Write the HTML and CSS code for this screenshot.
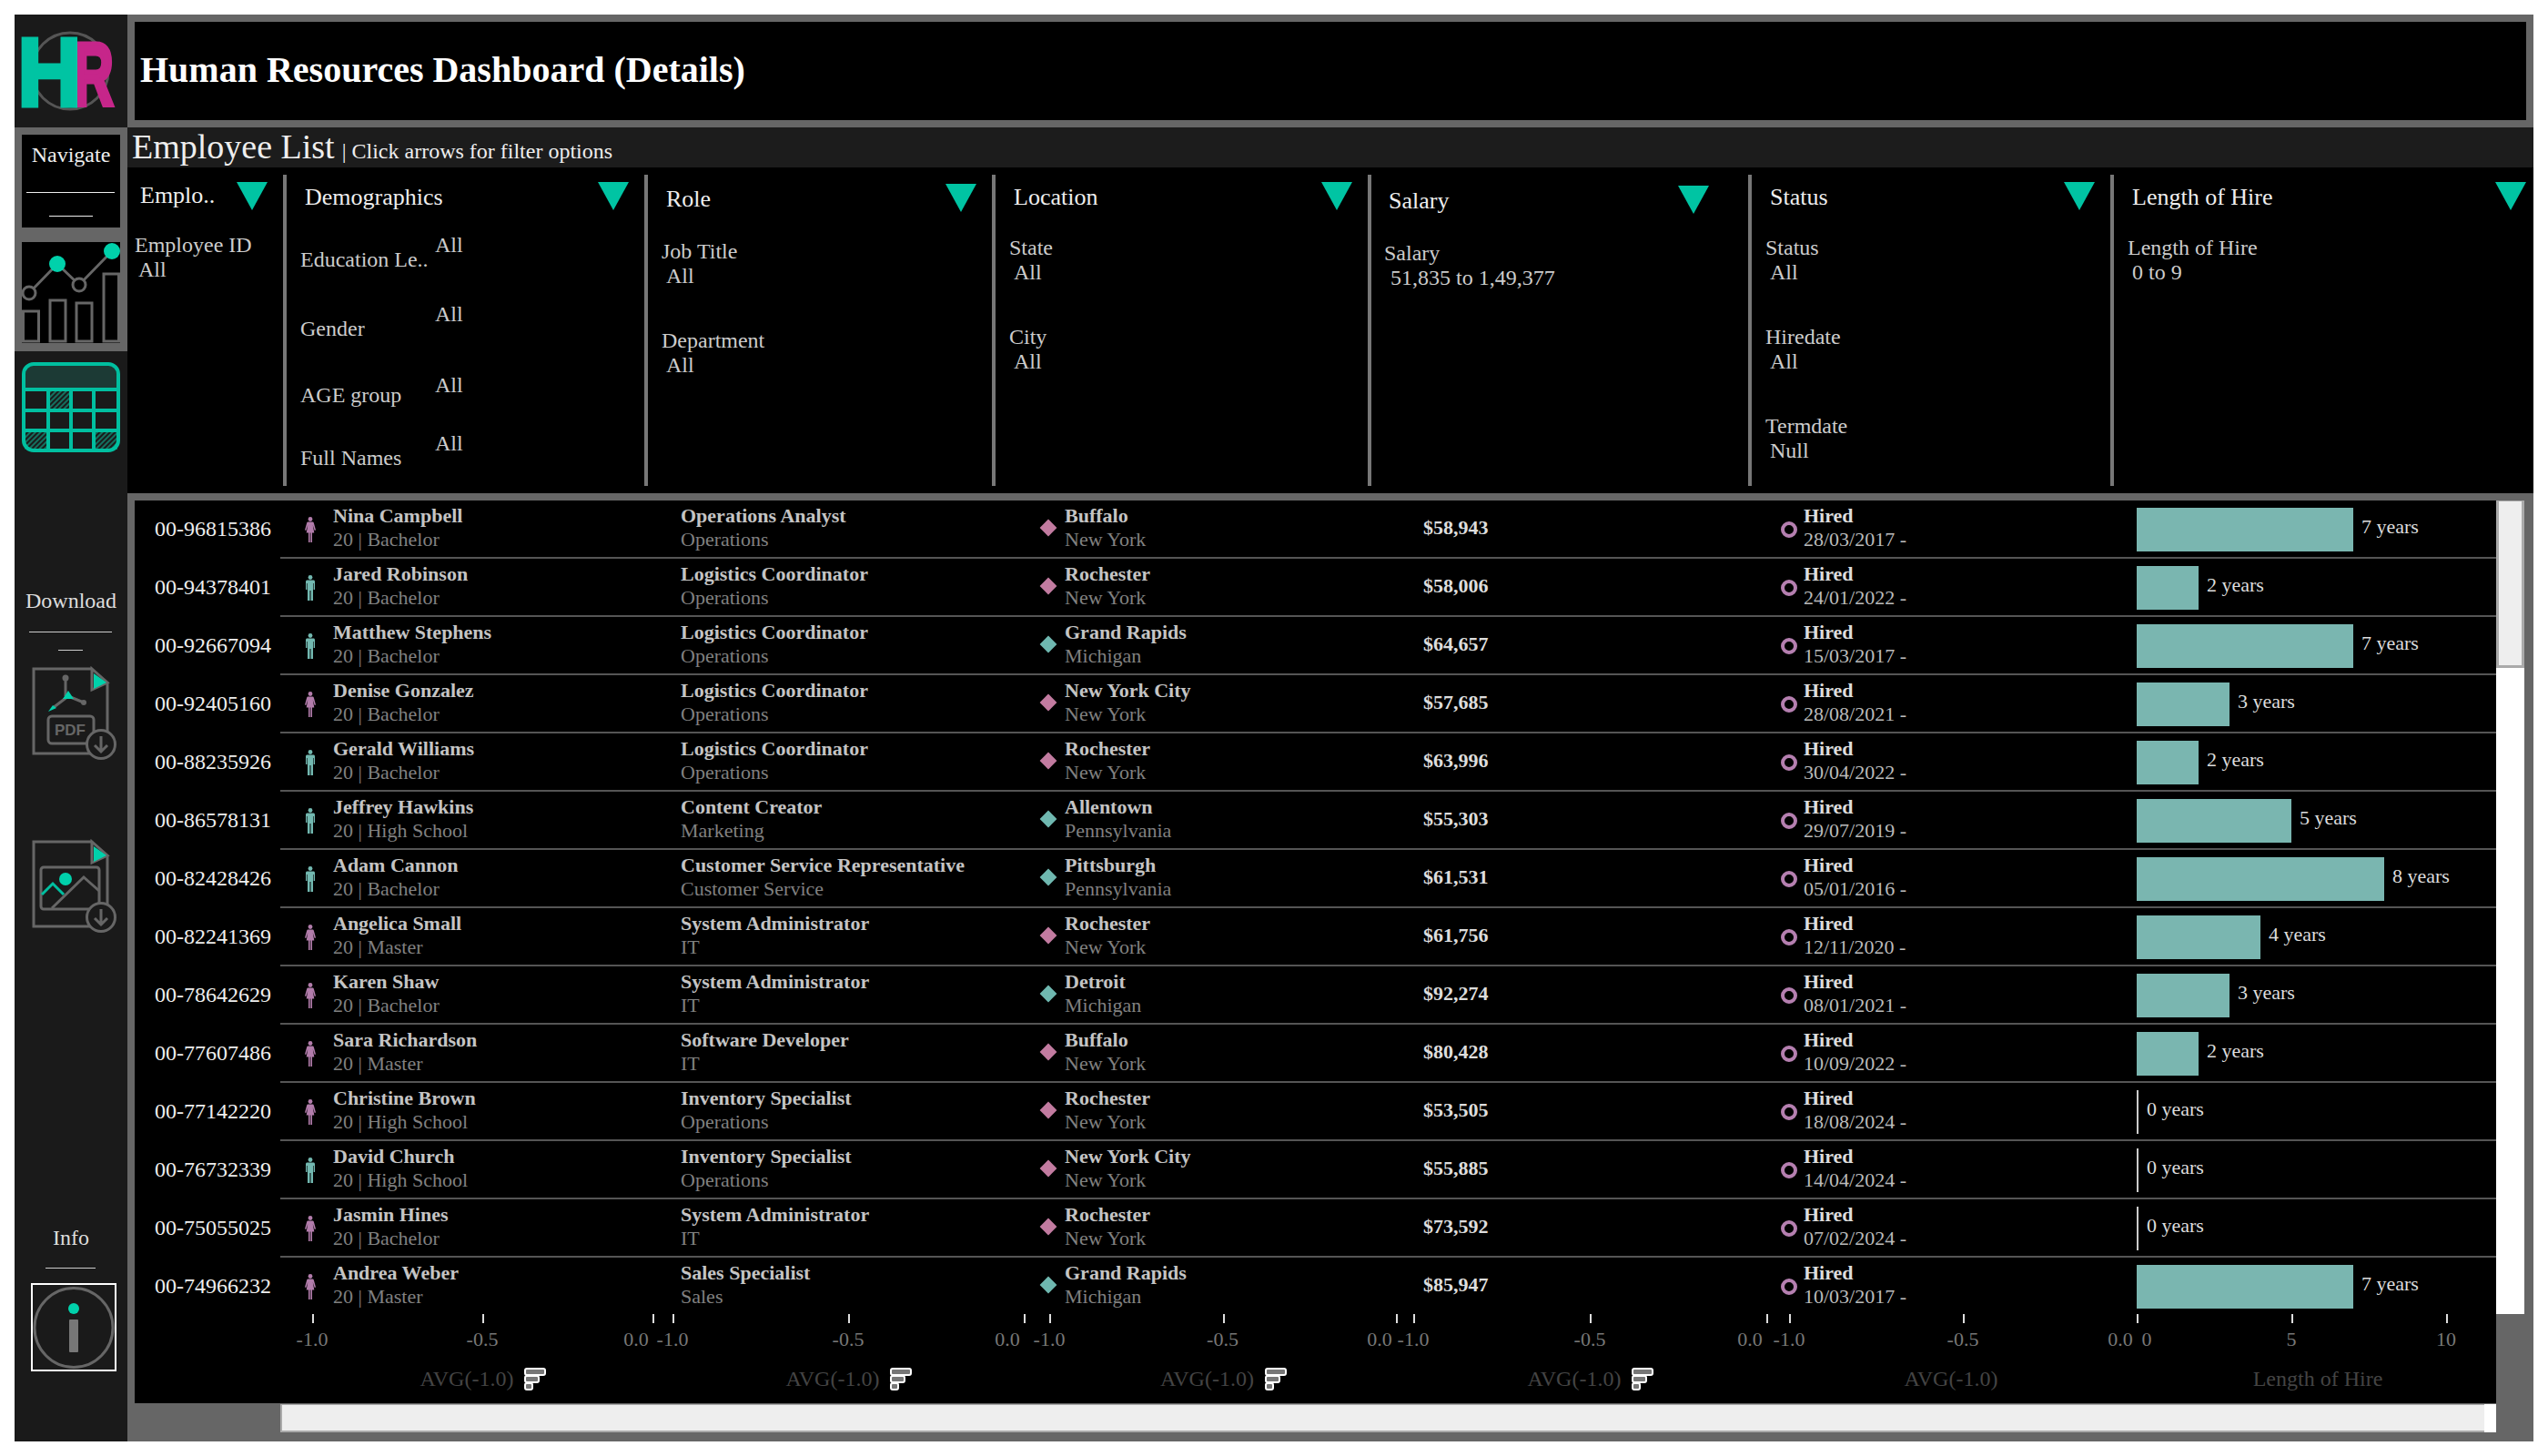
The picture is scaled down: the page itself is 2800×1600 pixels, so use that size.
FILE: index.html

```html
<!DOCTYPE html>
<html lang="en">
<head>
    <meta charset="UTF-8">
    <title>Human Resources Dashboard (Details)</title>
    <link rel="stylesheet" href="styles.css">
</head>
<body>

<!-- shared icon shapes -->
<svg class="defs" width="0" height="0">
    <defs>
        <pattern id="hatch" width="4" height="4" patternUnits="userSpaceOnUse" patternTransform="rotate(45)">
            <rect width="2" height="4" fill="#14705f"/>
        </pattern>
        <symbol id="female" viewBox="0 0 12 28">
            <circle cx="6" cy="2.5" r="2.4"/>
            <path d="M3.6 5.5h4.8c.8 0 1.2.5 1.4 1.1L12 14.5l-1.3.4-2-6 1.6 8.6H8v10.5H6.4V17.5h-.8v10.5H4V17.5H1.7L3.3 8.9l-2 6L0 14.5 2.2 6.6c.2-.6.6-1.1 1.4-1.1z"/>
        </symbol>
        <symbol id="male" viewBox="0 0 12 28">
            <circle cx="6" cy="2.5" r="2.4"/>
            <path d="M2.6 5.5h6.8c.9 0 1.6.7 1.6 1.6V16H9.6V9H9v19H6.5V17h-1v11H3V9h-.6v7H1V7.1c0-.9.7-1.6 1.6-1.6z"/>
        </symbol>
        <symbol id="doc" viewBox="0 0 94 104">
            <path d="M66 3H2v93h81V18" fill="none" stroke="#666" stroke-width="3"/>
            <path d="M66 3v23l17-8z" fill="none" stroke="#666" stroke-width="3"/>
            <path d="M68 8l14 10-14 7z" fill="#00d1ab"/>
        </symbol>
        <symbol id="download" viewBox="0 0 36 36">
            <circle cx="18" cy="18" r="15.5" fill="#1a1a1a" stroke="#666" stroke-width="3"/>
            <path d="M18 9v17M11 19l7 7 7-7" fill="none" stroke="#666" stroke-width="3"/>
        </symbol>
        <symbol id="sort" viewBox="0 0 24 25">
            <rect x="1" y="1" width="22" height="7" rx="2"/>
            <rect x="1" y="9" width="15" height="7" rx="2"/>
            <rect x="1" y="17" width="8" height="7" rx="2"/>
        </symbol>
    </defs>
</svg>

<div class="app">
    <aside class="sidebar">
        <svg class="logo" viewBox="0 0 124 124">
            <circle cx="61" cy="62" r="42" fill="none" stroke="#555" stroke-width="3"/>
            <text class="logo-r" transform="translate(65 100) scale(.62 1)">R</text>
            <text class="logo-h" transform="translate(3.500 100) scale(.92 1)">H</text>
        </svg>

        <div class="nav-frame">
            <div class="nav-box">
                <div class="nav-label">Navigate</div>
                <div class="nav-line"></div>
                <div class="nav-line-short"></div>
            </div>
            <svg class="chart-icon" viewBox="0 0 108 111">
                <g fill="none" stroke="#666" stroke-width="3">
                    <rect x="1.5" y="76" width="17" height="33"/>
                    <rect x="31" y="64" width="17" height="45"/>
                    <rect x="60" y="67" width="17" height="42"/>
                    <rect x="90" y="35" width="16.500" height="74"/>
                    <path d="M8 56L39 24 63 47 99 10"/>
                    <circle cx="8" cy="56" r="7" fill="#000"/>
                    <circle cx="63" cy="47" r="7" fill="#000"/>
                </g>
                <circle cx="39" cy="24" r="9" fill="#00d1ab"/>
                <circle cx="99" cy="10" r="9" fill="#00d1ab"/>
            </svg>
        </div>

        <svg class="table-icon" viewBox="0 0 108 99">
            <path d="M4 29V14C4 8 8 4 14 4h80c6 0 10 4 10 10v15z" fill="#1c3a35"/>
            <rect x="30" y="30" width="24" height="23" fill="url(#hatch)"/>
            <rect x="3" y="75" width="27" height="21" fill="url(#hatch)"/>
            <rect x="79" y="75" width="26" height="21" fill="url(#hatch)"/>
            <rect x="2" y="2" width="104" height="95" rx="11" fill="none" stroke="#00bfa0" stroke-width="4"/>
            <path d="M2 30h104M2 53h104M2 75h104M29 30v67M54 30v67M79 30v67" fill="none" stroke="#00bfa0" stroke-width="4"/>
        </svg>

        <div class="side-label side-download">Download</div>
        <div class="side-line"></div>
        <div class="side-line-short"></div>

        <svg class="file-icon" viewBox="0 0 94 104">
            <use href="#doc"/>
            <path d="M37 13v20M40 33L23 46M40 33l17 7" fill="none" stroke="#666" stroke-width="3"/>
            <circle cx="37" cy="13" r="3.500" fill="#666"/>
            <path d="M40 27l6 9h-12z" fill="#00d1ab"/>
            <path d="M18 50l9-4-4-3z" fill="#00d1ab"/>
            <circle cx="57" cy="40" r="3" fill="#666"/>
            <rect x="18" y="55" width="50" height="30" rx="4" fill="#1a1a1a" stroke="#666" stroke-width="3"/>
            <text class="pdf-text" x="25" y="76">PDF</text>
            <use href="#download" x="58" y="68" width="36" height="36"/>
        </svg>

        <svg class="file-icon file-icon-image" viewBox="0 0 94 104">
            <use href="#doc"/>
            <rect x="10" y="31" width="64" height="46" rx="3" fill="#1a1a1a" stroke="#666" stroke-width="3"/>
            <path d="M22 76L57 42 74 57" fill="none" stroke="#666" stroke-width="3"/>
            <path d="M11 61l12-12 12 12" fill="none" stroke="#00bfa0" stroke-width="3"/>
            <circle cx="37" cy="44" r="7" fill="#00d1ab"/>
            <use href="#download" x="58" y="68" width="36" height="36"/>
        </svg>

        <div class="side-label side-info">Info</div>
        <div class="side-line side-line-info"></div>
        <div class="info-box">
            <svg class="info-icon" viewBox="0 0 90 93">
                <ellipse cx="45" cy="47" rx="43" ry="43.500" fill="none" stroke="#666" stroke-width="3"/>
                <circle cx="45" cy="26" r="6" fill="#00d1ab"/>
                <rect x="40" y="38" width="10" height="36" rx="1" fill="#777"/>
            </svg>
        </div>
    </aside>

    <main class="main">
        <header class="top">
            <h1>Human Resources Dashboard (Details)</h1>
        </header>

        <div class="list-bar">
            <span class="list-title">Employee List</span>
            <span class="list-hint">| Click arrows for filter options</span>
        </div>

        <section class="filters">
            <div class="filter filter-emp">
                <div class="filter-head"><span>Emplo..</span><i class="arrow"></i></div>
                <div class="field"><div>Employee ID</div><div class="value">All</div></div>
            </div>
            <div class="filter filter-demo">
                <div class="filter-head"><span>Demographics</span><i class="arrow"></i></div>
                <div class="demo-row"><div class="demo-label">Education Le..</div><div>All</div></div>
                <div class="demo-row"><div class="demo-label">Gender</div><div>All</div></div>
                <div class="demo-row"><div class="demo-label">AGE group</div><div>All</div></div>
                <div class="demo-row"><div class="demo-label">Full Names</div><div>All</div></div>
            </div>
            <div class="filter filter-role">
                <div class="filter-head"><span>Role</span><i class="arrow"></i></div>
                <div class="field"><div>Job Title</div><div class="value">All</div></div>
                <div class="field"><div>Department</div><div class="value">All</div></div>
            </div>
            <div class="filter filter-loc">
                <div class="filter-head"><span>Location</span><i class="arrow"></i></div>
                <div class="field"><div>State</div><div class="value">All</div></div>
                <div class="field"><div>City</div><div class="value">All</div></div>
            </div>
            <div class="filter filter-sal">
                <div class="filter-head"><span>Salary</span><i class="arrow"></i></div>
                <div class="field"><div>Salary</div><div class="value">51,835 to 1,49,377</div></div>
            </div>
            <div class="filter filter-status">
                <div class="filter-head"><span>Status</span><i class="arrow"></i></div>
                <div class="field"><div>Status</div><div class="value">All</div></div>
                <div class="field"><div>Hiredate</div><div class="value">All</div></div>
                <div class="field"><div>Termdate</div><div class="value">Null</div></div>
            </div>
            <div class="filter filter-len">
                <div class="filter-head"><span>Length of Hire</span><i class="arrow"></i></div>
                <div class="field"><div>Length of Hire</div><div class="value">0 to 9</div></div>
            </div>
        </section>

        <section class="table-area">
            <div class="table-row-wrap">
                <div class="table">
                    <div class="row"><div class="row-id">00-96815386</div><div class="row-body"><svg class="person f"><use href="#female"/></svg><div><b>Nina Campbell</b><span>20 | Bachelor</span></div><div><b>Operations Analyst</b><span>Operations</span></div><i class="diamond pink"></i><div><b>Buffalo</b><span>New York</span></div><b class="salary">$58,943</b><i class="ring"></i><div class="status"><b>Hired</b><span>28/03/2017 -</span></div><div class="hire"><i class="bar" style="width:238px"></i><em>7 years</em></div></div></div>
                    <div class="row"><div class="row-id">00-94378401</div><div class="row-body"><svg class="person m"><use href="#male"/></svg><div><b>Jared Robinson</b><span>20 | Bachelor</span></div><div><b>Logistics Coordinator</b><span>Operations</span></div><i class="diamond pink"></i><div><b>Rochester</b><span>New York</span></div><b class="salary">$58,006</b><i class="ring"></i><div class="status"><b>Hired</b><span>24/01/2022 -</span></div><div class="hire"><i class="bar" style="width:68px"></i><em>2 years</em></div></div></div>
                    <div class="row"><div class="row-id">00-92667094</div><div class="row-body"><svg class="person m"><use href="#male"/></svg><div><b>Matthew Stephens</b><span>20 | Bachelor</span></div><div><b>Logistics Coordinator</b><span>Operations</span></div><i class="diamond teal"></i><div><b>Grand Rapids</b><span>Michigan</span></div><b class="salary">$64,657</b><i class="ring"></i><div class="status"><b>Hired</b><span>15/03/2017 -</span></div><div class="hire"><i class="bar" style="width:238px"></i><em>7 years</em></div></div></div>
                    <div class="row"><div class="row-id">00-92405160</div><div class="row-body"><svg class="person f"><use href="#female"/></svg><div><b>Denise Gonzalez</b><span>20 | Bachelor</span></div><div><b>Logistics Coordinator</b><span>Operations</span></div><i class="diamond pink"></i><div><b>New York City</b><span>New York</span></div><b class="salary">$57,685</b><i class="ring"></i><div class="status"><b>Hired</b><span>28/08/2021 -</span></div><div class="hire"><i class="bar" style="width:102px"></i><em>3 years</em></div></div></div>
                    <div class="row"><div class="row-id">00-88235926</div><div class="row-body"><svg class="person m"><use href="#male"/></svg><div><b>Gerald Williams</b><span>20 | Bachelor</span></div><div><b>Logistics Coordinator</b><span>Operations</span></div><i class="diamond pink"></i><div><b>Rochester</b><span>New York</span></div><b class="salary">$63,996</b><i class="ring"></i><div class="status"><b>Hired</b><span>30/04/2022 -</span></div><div class="hire"><i class="bar" style="width:68px"></i><em>2 years</em></div></div></div>
                    <div class="row"><div class="row-id">00-86578131</div><div class="row-body"><svg class="person m"><use href="#male"/></svg><div><b>Jeffrey Hawkins</b><span>20 | High School</span></div><div><b>Content Creator</b><span>Marketing</span></div><i class="diamond teal"></i><div><b>Allentown</b><span>Pennsylvania</span></div><b class="salary">$55,303</b><i class="ring"></i><div class="status"><b>Hired</b><span>29/07/2019 -</span></div><div class="hire"><i class="bar" style="width:170px"></i><em>5 years</em></div></div></div>
                    <div class="row"><div class="row-id">00-82428426</div><div class="row-body"><svg class="person m"><use href="#male"/></svg><div><b>Adam Cannon</b><span>20 | Bachelor</span></div><div><b>Customer Service Representative</b><span>Customer Service</span></div><i class="diamond teal"></i><div><b>Pittsburgh</b><span>Pennsylvania</span></div><b class="salary">$61,531</b><i class="ring"></i><div class="status"><b>Hired</b><span>05/01/2016 -</span></div><div class="hire"><i class="bar" style="width:272px"></i><em>8 years</em></div></div></div>
                    <div class="row"><div class="row-id">00-82241369</div><div class="row-body"><svg class="person f"><use href="#female"/></svg><div><b>Angelica Small</b><span>20 | Master</span></div><div><b>System Administrator</b><span>IT</span></div><i class="diamond pink"></i><div><b>Rochester</b><span>New York</span></div><b class="salary">$61,756</b><i class="ring"></i><div class="status"><b>Hired</b><span>12/11/2020 -</span></div><div class="hire"><i class="bar" style="width:136px"></i><em>4 years</em></div></div></div>
                    <div class="row"><div class="row-id">00-78642629</div><div class="row-body"><svg class="person f"><use href="#female"/></svg><div><b>Karen Shaw</b><span>20 | Bachelor</span></div><div><b>System Administrator</b><span>IT</span></div><i class="diamond teal"></i><div><b>Detroit</b><span>Michigan</span></div><b class="salary">$92,274</b><i class="ring"></i><div class="status"><b>Hired</b><span>08/01/2021 -</span></div><div class="hire"><i class="bar" style="width:102px"></i><em>3 years</em></div></div></div>
                    <div class="row"><div class="row-id">00-77607486</div><div class="row-body"><svg class="person f"><use href="#female"/></svg><div><b>Sara Richardson</b><span>20 | Master</span></div><div><b>Software Developer</b><span>IT</span></div><i class="diamond pink"></i><div><b>Buffalo</b><span>New York</span></div><b class="salary">$80,428</b><i class="ring"></i><div class="status"><b>Hired</b><span>10/09/2022 -</span></div><div class="hire"><i class="bar" style="width:68px"></i><em>2 years</em></div></div></div>
                    <div class="row"><div class="row-id">00-77142220</div><div class="row-body"><svg class="person f"><use href="#female"/></svg><div><b>Christine Brown</b><span>20 | High School</span></div><div><b>Inventory Specialist</b><span>Operations</span></div><i class="diamond pink"></i><div><b>Rochester</b><span>New York</span></div><b class="salary">$53,505</b><i class="ring"></i><div class="status"><b>Hired</b><span>18/08/2024 -</span></div><div class="hire"><i class="bar bar-zero"></i><em>0 years</em></div></div></div>
                    <div class="row"><div class="row-id">00-76732339</div><div class="row-body"><svg class="person m"><use href="#male"/></svg><div><b>David Church</b><span>20 | High School</span></div><div><b>Inventory Specialist</b><span>Operations</span></div><i class="diamond pink"></i><div><b>New York City</b><span>New York</span></div><b class="salary">$55,885</b><i class="ring"></i><div class="status"><b>Hired</b><span>14/04/2024 -</span></div><div class="hire"><i class="bar bar-zero"></i><em>0 years</em></div></div></div>
                    <div class="row"><div class="row-id">00-75055025</div><div class="row-body"><svg class="person f"><use href="#female"/></svg><div><b>Jasmin Hines</b><span>20 | Bachelor</span></div><div><b>System Administrator</b><span>IT</span></div><i class="diamond pink"></i><div><b>Rochester</b><span>New York</span></div><b class="salary">$73,592</b><i class="ring"></i><div class="status"><b>Hired</b><span>07/02/2024 -</span></div><div class="hire"><i class="bar bar-zero"></i><em>0 years</em></div></div></div>
                    <div class="row row-last"><div class="row-id">00-74966232</div><div class="row-body"><svg class="person f"><use href="#female"/></svg><div><b>Andrea Weber</b><span>20 | Master</span></div><div><b>Sales Specialist</b><span>Sales</span></div><i class="diamond teal"></i><div><b>Grand Rapids</b><span>Michigan</span></div><b class="salary">$85,947</b><i class="ring"></i><div class="status"><b>Hired</b><span>10/03/2017 -</span></div><div class="hire"><i class="bar" style="width:238px"></i><em>7 years</em></div></div></div>

                    <div class="axis">
                        <div class="axis-group">
                            <div class="ticks"><div class="tick"><i></i><span>-1.0</span></div><div class="tick"><i></i><span>-0.5</span></div><div class="tick tick-end"><i></i><span>0.0</span></div></div>
                            <div class="axis-title"><span>AVG(-1.0)</span><svg class="sort"><use href="#sort"/></svg></div>
                        </div>
                        <div class="axis-group">
                            <div class="ticks"><div class="tick"><i></i><span>-1.0</span></div><div class="tick"><i></i><span>-0.5</span></div><div class="tick tick-end"><i></i><span>0.0</span></div></div>
                            <div class="axis-title"><span>AVG(-1.0)</span><svg class="sort"><use href="#sort"/></svg></div>
                        </div>
                        <div class="axis-group">
                            <div class="ticks"><div class="tick"><i></i><span>-1.0</span></div><div class="tick"><i></i><span>-0.5</span></div><div class="tick tick-end"><i></i><span>0.0</span></div></div>
                            <div class="axis-title"><span>AVG(-1.0)</span><svg class="sort"><use href="#sort"/></svg></div>
                        </div>
                        <div class="axis-group">
                            <div class="ticks"><div class="tick"><i></i><span>-1.0</span></div><div class="tick"><i></i><span>-0.5</span></div><div class="tick tick-end"><i></i><span>0.0</span></div></div>
                            <div class="axis-title"><span>AVG(-1.0)</span><svg class="sort"><use href="#sort"/></svg></div>
                        </div>
                        <div class="axis-group">
                            <div class="ticks"><div class="tick"><i></i><span>-1.0</span></div><div class="tick"><i></i><span>-0.5</span></div><div class="tick tick-end"><i></i><span>0.0</span></div></div>
                            <div class="axis-title axis-title-plain"><span>AVG(-1.0)</span></div>
                        </div>
                        <div class="axis-group">
                            <div class="ticks"><div class="tick tick-start"><i></i><span>0</span></div><div class="tick"><i></i><span>5</span></div><div class="tick"><i></i><span>10</span></div></div>
                            <div class="axis-title axis-title-len"><span>Length of Hire</span></div>
                        </div>
                    </div>
                </div>
                <div class="vscroll"><div class="vthumb"></div></div>
            </div>
            <div class="hscroll"><div class="hthumb"></div></div>
        </section>
    </main>
</div>

</body>
</html>
```

FILE: styles.css

```css
* { box-sizing: border-box; }
html, body { margin: 0; overflow: hidden; }
body { width: 2800px; height: 1600px; padding: 16px; background: #fff; font-family: "Liberation Serif", "Times New Roman", serif; }
.defs { display: block; height: 0; }
i, em { font-style: normal; }

.app { display: flex; width: 2768px; height: 1568px; background: #666; }

/* sidebar */
.sidebar { width: 124px; background: #1a1a1a; color: #ddd; }
.logo { display: block; width: 124px; height: 124px; }
.logo-h { font: bold 105px "Liberation Sans", sans-serif; fill: #00c4a3; stroke: #00c4a3; stroke-width: 5; }
.logo-r { font: bold 98px "Liberation Sans", sans-serif; fill: #c6268a; stroke: #c6268a; stroke-width: 5; }
.nav-frame { height: 246px; padding: 8px; background: #666; }
.nav-box { height: 102px; background: #000; color: #eee; }
.nav-label { font-size: 24px; line-height: 28px; padding-top: 8px; text-align: center; }
.nav-line { width: 97px; height: 1px; margin: 27px 0 0 5px; background: #eee; }
.nav-line-short { width: 48px; height: 1px; margin: 25px 0 0 30px; background: #eee; }
.chart-icon { display: block; width: 108px; height: 111px; margin-top: 16px; background: #000; }
.table-icon { display: block; width: 108px; height: 99px; margin: 12px 0 0 8px; }
.side-label { font-size: 24px; line-height: 28px; text-align: center; color: #ddd; }
.side-download { margin-top: 149px; }
.side-line { width: 91px; height: 1px; margin: 20px 0 0 16px; background: #ccc; }
.side-line-short { width: 27px; height: 1px; margin: 19px 0 0 48px; background: #ccc; }
.file-icon { display: block; width: 94px; height: 104px; margin: 17px 0 0 19px; }
.file-icon-image { margin-top: 86px; }
.pdf-text { font: bold 17px "Liberation Sans", sans-serif; fill: #666; }
.side-info { margin-top: 320px; }
.side-line-info { width: 55px; margin: 19px 0 0 34px; }
.info-box { width: 94px; height: 97px; margin: 16px 0 0 18px; border: 2px solid #fff; }
.info-icon { display: block; width: 90px; height: 93px; }

/* top of main */
.main { width: 2644px; }
.top { height: 124px; padding: 8px 8px 8px 8px; background: #666; }
.top h1 { height: 108px; margin: 0; padding-left: 6px; background: #000; color: #fff; font-size: 40px; line-height: 106px; font-weight: bold; }
.list-bar { height: 44px; padding-left: 5px; background: #1c1c1c; color: #eee; line-height: 42px; white-space: nowrap; }
.list-title { font-size: 38px; }
.list-hint { font-size: 24px; margin-left: 4px; }

/* filters */
.filters { display: flex; height: 358px; padding-top: 8px; background: #000; color: #ccc; font-size: 24px; line-height: 27px; }
.filter { height: 342px; padding-top: 7px; border-right: 4px solid #777; flex: none; }
.filter-head { display: flex; justify-content: space-between; align-items: center; height: 32px; color: #eee; font-size: 26px; line-height: 32px; }
.filter-head span { padding-top: 3px; }
.filter-emp .filter-head span { padding-top: 0; }
.arrow { width: 0; height: 0; border-left: 17px solid transparent; border-right: 17px solid transparent; border-top: 31px solid #00c4a3; }
.field { margin-top: 44px; }
.filter-head + .field { margin-top: 28px; }
.value { padding-left: 5px; }

.filter-emp { width: 175px; padding-left: 8px; padding-right: 17px; }
.filter-emp .filter-head { padding-left: 6px; }
.filter-emp .filter-head + .field { margin-top: 25px; }
.filter-emp .value { padding-left: 4px; }
.filter-demo { width: 397px; padding-left: 15px; padding-right: 17px; }
.filter-demo .filter-head { padding-left: 5px; }
.demo-row { display: grid; grid-template-columns: 148px auto; height: 76px; }
.filter-head + .demo-row { margin-top: 25px; }
.demo-label { padding-top: 16px; }
.demo-row:nth-child(3) { height: 78px; }
.demo-row:nth-child(4) { height: 64px; }
.demo-row:nth-child(4) .demo-label { padding-top: 11px; }
.filter-role { width: 382px; padding: 9px 17px 0 15px; }
.filter-role .filter-head { padding-left: 5px; }
.filter-role .filter-head + .field { margin-top: 30px; }
.filter-loc { width: 413px; padding-left: 15px; padding-right: 17px; }
.filter-loc .filter-head { padding-left: 5px; }
.filter-sal { width: 418px; padding: 11px 43px 0 14px; }
.filter-sal .filter-head { padding-left: 5px; }
.filter-sal .filter-head + .field { margin-top: 30px; }
.filter-sal .value { padding-left: 7px; }
.filter-status { width: 398px; padding-left: 15px; padding-right: 17px; }
.filter-status .filter-head { padding-left: 5px; }
.filter-len { flex: 1; padding-left: 15px; padding-right: 8px; border-right: 0; }
.filter-len .filter-head { padding-left: 5px; }

/* table */
.table-area { height: 1042px; padding-top: 8px; }
.table-row-wrap { display: flex; align-items: flex-start; padding-left: 8px; }
.table { width: 2595px; height: 992px; background: #000; flex: none; }
.row { display: flex; height: 64px; }
.row-id { width: 160px; padding: 16px 0 0 22px; color: #eee; font-size: 24px; line-height: 30px; }
.row-body { display: grid; grid-template-columns: 58px 382px 392px 30px 394px 386px 32px 366px 395px; align-items: start; width: 2435px; height: 64px; padding-top: 4px; border-bottom: 2px solid #555; font-size: 22px; line-height: 26px; }
.row-last .row-body { border-bottom: 0; }
.row-body b { display: block; color: #c4c4c4; }
.row-body span { display: block; color: #808080; }
.person { display: block; width: 12px; height: 28px; margin: 14px 0 0 27px; }
.person.f { fill: #b27cab; }
.person.m { fill: #72b8b0; }
.diamond { display: block; width: 14px; height: 14px; margin: 19px 0 0 5px; transform: rotate(45deg) scale(.95); }
.diamond.pink { background: #c27ba0; }
.diamond.teal { background: #6fb8b0; }
.row-body .salary { margin-top: 13px; color: #ddd; }
.ring { display: block; width: 18px; height: 18px; margin: 19px 0 0 7px; border: 4px solid #b57fb0; border-radius: 50%; }
.row-body .status b { color: #ddd; }
.row-body .status span { color: #bbb; }
.hire { display: flex; align-items: center; gap: 9px; height: 48px; margin-top: 4px; color: #ddd; }
.hire em { margin-top: -6px; }
.bar { display: block; height: 48px; background: #7ab6b0; }
.bar-zero { width: 2px; background: #ccc; }

/* axis under the table */
.axis { display: flex; margin: -2px 0 0 195px; }
.axis-group:nth-child(1) { width: 376px; }
.axis-group:nth-child(2) { width: 388px; margin-left: 20px; }
.axis-group:nth-child(3) { width: 383px; margin-left: 26px; }
.axis-group:nth-child(4) { width: 390px; margin-left: 17px; }
.axis-group:nth-child(5) { width: 384px; margin-left: 23px; }
.axis-group:nth-child(6) { width: 342px; margin-left: -2px; }
.ticks { display: flex; justify-content: space-between; height: 56px; }
.tick { display: flex; flex-direction: column; align-items: center; width: 2px; color: #777; font-size: 22px; line-height: 26px; white-space: nowrap; }
.tick i { display: block; flex: none; width: 2px; height: 10px; background: #ddd; }
.tick span { margin-top: 5px; transform: translateX(-1px); }
.tick-end span { transform: translateX(-19px); }
.tick-start span { transform: translateX(10px); }
.axis-title { display: flex; justify-content: center; align-items: center; gap: 12px; height: 30px; color: #444; font-size: 24px; line-height: 30px; white-space: nowrap; }
.axis-title-plain { padding-right: 28px; }
.axis-title-len { padding-left: 56px; }
.sort { display: block; width: 24px; height: 25px; fill: #777; stroke: #fff; stroke-width: 2; }

/* scrollbars */
.vscroll { width: 31px; height: 894px; background: #fff; flex: none; }
.vthumb { height: 184px; background: #eee; border: 3px solid #aaa; border-top-width: 1px; }
.hscroll { width: 2435px; height: 31px; margin: 1px 0 0 168px; background: #fff; }
.hthumb { width: 2422px; height: 31px; background: #eee; border: 2px solid #aaa; border-width: 1px 0 2px 2px; }
```
